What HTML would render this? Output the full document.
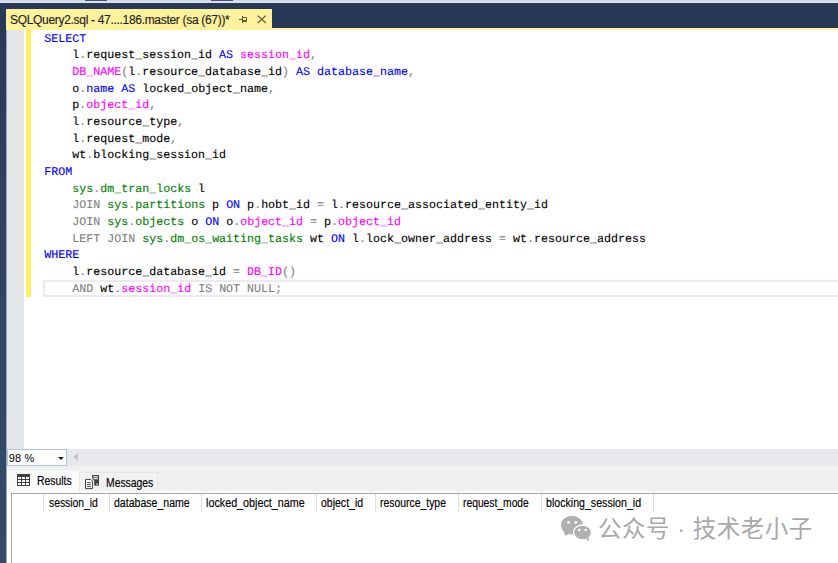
<!DOCTYPE html>
<html><head><meta charset="utf-8"><title>SQLQuery2.sql</title>
<style>
html,body{margin:0;padding:0;}
body{width:838px;height:563px;overflow:hidden;background:#fff;position:relative;font-family:"Liberation Sans",sans-serif;}
.abs{position:absolute;}
#topstrip{left:0;top:0;width:838px;height:3px;background:linear-gradient(#cfd5e6,#e2e5f0);}
#topstrip i{position:absolute;top:0;height:1px;background:#41547a;}
#navy{left:0;top:3px;width:838px;height:25px;background:#293955;}
#leftnavy{left:0;top:3px;width:6px;height:560px;background:linear-gradient(#293955 0,#293955 25px,#304161 200px,#354a6d 100%);}
#leftedge{left:6px;top:30px;width:1px;height:533px;background:#97a5c5;}
#tab{left:6px;top:9px;width:266px;height:21px;background:#fff29d;}
#tabline{left:6px;top:28px;width:832px;height:2px;background:#fff29d;}
#tabtxt{-webkit-text-stroke:0.15px;left:10px;top:13px;font-size:12px;line-height:14px;color:#1e1e1e;white-space:nowrap;letter-spacing:-0.31px;}
#margin{left:7px;top:30px;width:17px;height:419px;background:#e6e7e8;}
#ybar{left:26px;top:30px;width:5px;height:267px;background:#ffee62;}
.ln{position:absolute;text-rendering:geometricPrecision;-webkit-text-stroke:0.12px;white-space:pre;font-family:"Liberation Mono",monospace;font-size:11.67px;letter-spacing:0px;line-height:17px;height:17px;color:#000;}
.k{color:#0000ff}.m{color:#ff00ff}.g{color:#808080}.s{color:#008000}.t{color:#000}
#curline{left:43px;top:280px;width:800px;height:13px;border:2px solid #eaeaf2;border-right:0;box-sizing:content-box;}
#hbar{left:7px;top:449px;width:832px;height:17px;background:#e8e8ec;}
#combo{left:7px;top:449px;width:58px;height:15px;border:1px solid #b4c3e0;background:#fff;}
#combo span{position:absolute;left:0.7px;top:1px;font-size:11px;letter-spacing:0.2px;line-height:15px;color:#000;}
#combo i{position:absolute;left:50px;top:7px;width:0;height:0;border-left:3px solid transparent;border-right:3px solid transparent;border-top:3px solid #1e1e1e;}
#harrow{left:73px;top:453px;width:0;height:0;border-top:4.5px solid transparent;border-bottom:4.5px solid transparent;border-right:5px solid #c2c3c9;}
#respanel{left:7px;top:466px;width:831px;height:25px;background:#f0f0f0;border-bottom:2px solid #fafafa;}
#restab{left:7px;top:470px;width:73px;height:24px;background:#fafafa;border-top:1px solid #f4f4f4;border-right:1px solid #ececec;box-sizing:border-box;}
#msgtab{left:80px;top:472px;width:78px;height:19px;background:#f2f2f2;border-top:1px solid #e6e6e6;border-right:1px solid #e8e8e8;box-sizing:border-box;}
.tt{position:absolute;-webkit-text-stroke:0.15px;font-size:12px;line-height:14px;color:#000;white-space:nowrap;transform:scaleX(0.865);transform-origin:0 0;}
#grid{left:11px;top:493px;width:827px;height:70px;background:#fff;border-top:1px solid #a8a8a8;border-left:1px solid #a8a8a8;box-sizing:border-box;}
.hc{position:absolute;-webkit-text-stroke:0.15px;top:495px;height:17px;line-height:17px;font-size:12px;color:#000;white-space:nowrap;transform:scaleX(0.865);transform-origin:0 0;}
.hs{position:absolute;top:494px;height:18px;width:1px;background:#dedede;}
#wm{left:597.9px;top:515px;letter-spacing:0.5px;font-size:23.5px;line-height:28px;color:#a9a9a9;white-space:nowrap;font-family:"Liberation Sans","Noto Sans CJK SC",sans-serif;word-spacing:0.3px;}
</style></head>
<body>
<div id="navy" class="abs"></div>
<div id="topstrip" class="abs"><i style="left:85px;width:22px"></i><i style="left:211px;width:22px"></i></div>
<div id="leftnavy" class="abs"></div>
<div id="leftedge" class="abs"></div>
<div id="tabline" class="abs"></div>
<div id="tab" class="abs"></div>
<div id="tabtxt" class="abs">SQLQuery2.sql - 47....186.master (sa (67))*</div>
<svg class="abs" style="left:238px;top:12px" width="32" height="14" viewBox="0 0 32 14">
 <path d="M1 7.5H4.5M4.5 4V11M4.5 5.5H8.5V9.5H4.5M4.5 8.5H8.5" stroke="#5d5a3c" stroke-width="1" fill="none"/>
 <path d="M19.7 3.6L27.8 11M27.8 3.6L19.7 11" stroke="#5d5a3c" stroke-width="1.25" fill="none"/>
</svg>
<div id="margin" class="abs"></div>
<div id="ybar" class="abs"></div>
<div id="curline" class="abs"></div>
<div class="ln" style="top:30.50px;left:44.20px"><span class="k">SELECT</span></div>
<div class="ln" style="top:47.17px;left:72.20px"><span class="t">l</span><span class="g">.</span><span class="t">request_session_id </span><span class="k">AS</span><span class="t"> </span><span class="m">session_id</span><span class="g">,</span></div>
<div class="ln" style="top:63.83px;left:72.20px"><span class="m">DB_NAME</span><span class="g">(</span><span class="t">l</span><span class="g">.</span><span class="t">resource_database_id</span><span class="g">)</span><span class="t"> </span><span class="k">AS</span><span class="t"> </span><span class="k">database_name</span><span class="g">,</span></div>
<div class="ln" style="top:80.50px;left:72.20px"><span class="t">o</span><span class="g">.</span><span class="k">name</span><span class="t"> </span><span class="k">AS</span><span class="t"> locked_object_name</span><span class="g">,</span></div>
<div class="ln" style="top:97.17px;left:72.20px"><span class="t">p</span><span class="g">.</span><span class="m">object_id</span><span class="g">,</span></div>
<div class="ln" style="top:113.84px;left:72.20px"><span class="t">l</span><span class="g">.</span><span class="t">resource_type</span><span class="g">,</span></div>
<div class="ln" style="top:130.50px;left:72.20px"><span class="t">l</span><span class="g">.</span><span class="t">request_mode</span><span class="g">,</span></div>
<div class="ln" style="top:147.17px;left:72.20px"><span class="t">wt</span><span class="g">.</span><span class="t">blocking_session_id</span></div>
<div class="ln" style="top:163.84px;left:44.20px"><span class="k">FROM</span></div>
<div class="ln" style="top:180.50px;left:72.20px"><span class="s">sys</span><span class="g">.</span><span class="s">dm_tran_locks</span><span class="t"> l</span></div>
<div class="ln" style="top:197.17px;left:72.20px"><span class="g">JOIN</span><span class="t"> </span><span class="s">sys</span><span class="g">.</span><span class="s">partitions</span><span class="t"> p </span><span class="k">ON</span><span class="t"> p</span><span class="g">.</span><span class="t">hobt_id </span><span class="g">=</span><span class="t"> l</span><span class="g">.</span><span class="t">resource_associated_entity_id</span></div>
<div class="ln" style="top:213.84px;left:72.20px"><span class="g">JOIN</span><span class="t"> </span><span class="s">sys</span><span class="g">.</span><span class="s">objects</span><span class="t"> o </span><span class="k">ON</span><span class="t"> o</span><span class="g">.</span><span class="m">object_id</span><span class="t"> </span><span class="g">=</span><span class="t"> p</span><span class="g">.</span><span class="m">object_id</span></div>
<div class="ln" style="top:230.50px;left:72.20px"><span class="g">LEFT JOIN</span><span class="t"> </span><span class="s">sys</span><span class="g">.</span><span class="s">dm_os_waiting_tasks</span><span class="t"> wt </span><span class="k">ON</span><span class="t"> l</span><span class="g">.</span><span class="t">lock_owner_address </span><span class="g">=</span><span class="t"> wt</span><span class="g">.</span><span class="t">resource_address</span></div>
<div class="ln" style="top:247.17px;left:44.20px"><span class="k">WHERE</span></div>
<div class="ln" style="top:263.84px;left:72.20px"><span class="t">l</span><span class="g">.</span><span class="t">resource_database_id </span><span class="g">=</span><span class="t"> </span><span class="m">DB_ID</span><span class="g">()</span></div>
<div class="ln" style="top:280.50px;left:72.20px"><span class="g">AND</span><span class="t"> wt</span><span class="g">.</span><span class="m">session_id</span><span class="t"> </span><span class="g">IS NOT NULL;</span></div>
<div id="hbar" class="abs"></div>
<div id="combo" class="abs"><span>98 %</span><i></i></div>
<div id="harrow" class="abs"></div>
<div id="respanel" class="abs"></div>
<div id="restab" class="abs"></div>
<div id="msgtab" class="abs"></div>
<svg class="abs" style="left:17px;top:474px" width="13" height="12" viewBox="0 0 13 12">
 <rect x="0" y="0" width="13" height="12" fill="#404040"/>
 <g fill="#fff"><rect x="1" y="3" width="3" height="2"/><rect x="5" y="3" width="3" height="2"/><rect x="9" y="3" width="3" height="2"/>
 <rect x="1" y="6" width="3" height="2"/><rect x="5" y="6" width="3" height="2"/><rect x="9" y="6" width="3" height="2"/>
 <rect x="1" y="9" width="3" height="2"/><rect x="5" y="9" width="3" height="2"/><rect x="9" y="9" width="3" height="2"/></g>
</svg>
<div class="tt" style="left:37.3px;top:474px">Results</div>
<svg class="abs" style="left:84px;top:474px" width="16" height="16" viewBox="0 0 16 16">
 <rect x="8.2" y="1" width="6.8" height="10.6" fill="#404040"/>
 <rect x="9.4" y="2.2" width="4.5" height="1.1" fill="#fff"/><rect x="9.4" y="4.1" width="4.5" height="1.1" fill="#fff"/>
 <rect x="12.4" y="9.5" width="1.3" height="1.3" fill="#fff"/>
 <path d="M0.5 4.3H7.6L10.2 6.8V15.6H0.5Z" fill="#f4f4f4"/>
 <path d="M1.5 5.4H6.8L8.6 7.2V14.6H1.5Z" fill="#fff" stroke="#404040" stroke-width="1"/>
 <path d="M3 8.6H7M3 10.6H7M3 12.6H7" stroke="#404040" stroke-width="0.9" fill="none"/>
</svg>
<div class="tt" style="left:105.8px;top:476px">Messages</div>
<div id="grid" class="abs"></div>
<div class="hc" style="left:48.6px;transform:scaleX(0.862)">session_id</div>
<div class="hc" style="left:114.2px;transform:scaleX(0.880)">database_name</div>
<div class="hc" style="left:206.0px;transform:scaleX(0.897)">locked_object_name</div>
<div class="hc" style="left:321.4px;transform:scaleX(0.876)">object_id</div>
<div class="hc" style="left:380.2px;transform:scaleX(0.867)">resource_type</div>
<div class="hc" style="left:463.2px;transform:scaleX(0.858)">request_mode</div>
<div class="hc" style="left:546.1px;transform:scaleX(0.885)">blocking_session_id</div>
<div class="hs" style="left:43px"></div>
<div class="hs" style="left:109px"></div>
<div class="hs" style="left:201px"></div>
<div class="hs" style="left:316px"></div>
<div class="hs" style="left:375px"></div>
<div class="hs" style="left:458px"></div>
<div class="hs" style="left:541px"></div>
<div class="hs" style="left:653px"></div>
<svg class="abs" style="left:556px;top:510px" width="44" height="36" viewBox="0 0 44 36">
 <ellipse cx="15.9" cy="15.1" rx="10.9" ry="9.4" fill="#b0b0b0"/>
 <path d="M7.6 21L9.2 25.8L14 23.6Z" fill="#b0b0b0"/>
 <path d="M30 29L32.8 30.9L32.3 27Z" fill="#b0b0b0"/>
 <ellipse cx="26.5" cy="22.4" rx="9" ry="7.4" fill="#b0b0b0" stroke="#fff" stroke-width="1.3"/>
 <path d="M30.2 28.6L32.8 30.9L32.6 26.8Z" fill="#b0b0b0"/>
 <circle cx="12.5" cy="12.5" r="1.4" fill="#fff"/><circle cx="19.8" cy="12.5" r="1.4" fill="#fff"/>
 <circle cx="23.3" cy="20" r="1.2" fill="#fff"/><circle cx="29.7" cy="20" r="1.2" fill="#fff"/>
</svg>
<div id="wm" class="abs">公众号 · 技术老小子</div>
</body></html>
